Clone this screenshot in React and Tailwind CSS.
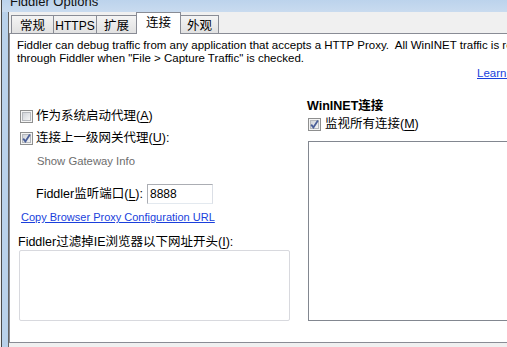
import React from 'react';

const font = "font-['Liberation_Sans','Noto_Sans_CJK_SC',sans-serif]";

const CheckBox = ({ checked }) => (
  <svg width="13" height="13" viewBox="0 0 13 13" className="shrink-0">
    <defs>
      <linearGradient id={checked ? 'cbOn' : 'cbOff'} x1="0" y1="0" x2="1" y2="1">
        <stop offset="0" stopColor="#cdd1d7" />
        <stop offset="1" stopColor="#f7f7f7" />
      </linearGradient>
    </defs>
    <rect x="0.5" y="0.5" width="12" height="12" fill="#f4f4f4" stroke="#8e8f8f" />
    <rect x="2.5" y="2.5" width="8" height="8" fill={`url(#${checked ? 'cbOn' : 'cbOff'})`} stroke="#b5b8bd" />
    {checked && (
      <path d="M3.2 6.6 L5.4 9.4 L9.9 2.6" fill="none" stroke="#4a5f99" strokeWidth="1.8" />
    )}
  </svg>
);

const Mn = ({ pre = '(', ch, post = ')' }) => (
  <span>
    {pre}
    <span className="underline underline-offset-[2px]">{ch}</span>
    {post}
  </span>
);

const tabs = [
  { label: '常规', w: 'w-[42px]', cls: 'border-l' },
  { label: 'HTTPS', w: 'w-[43px]', cls: 'border-l text-[12px]' },
  { label: '扩展', w: 'w-[40px]', cls: 'border-l' },
  { label: '连接', w: 'w-[45px]', active: true },
  { label: '外观', w: 'w-[38px]', cls: 'border-r' },
];

export default function App() {
  return (
    <div className={`w-[507px] h-[347px] overflow-hidden bg-[#f0f0f0] text-black ${font}`}>
      <div className="ml-[1px] w-[640px] h-full flex flex-col border-l border-[#4a4a4a]">
        {/* title bar, mostly scrolled off */}
        <div className="h-[12px] shrink-0 overflow-hidden bg-gradient-to-b from-[#bcd3ec] to-[#c9dbef] pl-[8px]">
          <div className="-mt-[6px] text-[13px] leading-[16px] text-[#111]">Fiddler Options</div>
        </div>

        <div className="flex flex-1 min-h-0">
          <div className="w-[6px] shrink-0 bg-[#b9d1ea]" />
          <div className="flex-1 flex flex-col border-l border-[#646464] bg-[#f0f0f0]">
            {/* tab strip */}
            <div className="h-[21px] shrink-0 flex items-end pl-[2px] relative z-10">
              {tabs.map((t) =>
                t.active ? (
                  <div
                    key={t.label}
                    className={`${t.w} h-[22px] -mb-[1px] bg-white border-t border-l border-r border-[#898c95] flex justify-center pt-[3px] text-[12.5px] leading-[15px]`}
                  >
                    {t.label}
                  </div>
                ) : (
                  <div
                    key={t.label}
                    className={`${t.w} h-[18px] bg-gradient-to-b from-[#f4f4f4] to-[#e1e1e1] border-t border-[#898c95] ${t.cls} flex justify-center pt-[3px] text-[12.5px] leading-[15px]`}
                  >
                    {t.label}
                  </div>
                )
              )}
            </div>

            {/* tab page */}
            <div className="h-[310px] shrink-0 bg-white border-t border-l border-b border-[#898c95]">
              <div className="pt-[5px] pl-[7px] text-[11.5px] leading-[13px] whitespace-nowrap">
                <div>Fiddler can debug traffic from any application that accepts a HTTP Proxy.&nbsp; All WinINET traffic is routed</div>
                <div>through Fiddler when "File &gt; Capture Traffic" is checked.</div>
              </div>
              <div className="mt-[2px] pl-[467px] text-[11.5px] leading-[13px]">
                <span className="text-[#1a3fdc] underline">Learn more...</span>
              </div>

              <div className="mt-[19px] flex">
                {/* left column */}
                <div className="w-[297px] shrink-0 flex flex-col text-[12.5px]">
                  <div className="mt-[9px] ml-[10px] h-[16px] flex items-center gap-[3px] leading-[16px]">
                    <CheckBox />
                    <span>
                      作为系统启动代理<Mn ch="A" />
                    </span>
                  </div>
                  <div className="mt-[6px] ml-[10px] h-[16px] flex items-center gap-[3px] leading-[16px]">
                    <CheckBox checked />
                    <span>
                      连接上一级网关代理<Mn ch="U" post="):" />
                    </span>
                  </div>
                  <div className="mt-[9px] ml-[27px] text-[11.3px] leading-[13px] text-[#6d6d6d]">Show Gateway Info</div>
                  <div className="mt-[16px] ml-[26px] h-[20px] flex items-center leading-[16px]">
                    <span className="w-[111px] shrink-0">
                      Fiddler监听端口<Mn ch="L" post="):" />
                    </span>
                    <div className="w-[66px] h-[20px] border border-[#abadb3] border-b-[#e3e9ef] border-r-[#dbdfe6] pl-[2px] text-[12px] leading-[18px]">
                      8888
                    </div>
                  </div>
                  <div className="mt-[7px] ml-[11px] text-[11px] leading-[13px]">
                    <span className="text-[#1a3fdc] underline">Copy Browser Proxy Configuration URL</span>
                  </div>
                  <div className="mt-[11px] ml-[8px] leading-[15px]">
                    Fiddler过滤掉IE浏览器以下网址开头<Mn ch="I" post="):" />
                  </div>
                  <div className="ml-[9px] w-[271px] h-[71px] border border-[#d8d9de] rounded-[2px] bg-white" />
                </div>

                {/* right column */}
                <div className="flex flex-col text-[12.5px]">
                  <div className="font-bold leading-[15px]">WinINET连接</div>
                  <div className="mt-[2px] ml-[1px] h-[16px] flex items-center gap-[4px] leading-[16px]">
                    <CheckBox checked />
                    <span>
                      监视所有连接<Mn ch="M" />
                    </span>
                  </div>
                  <div className="mt-[9px] ml-[1px] w-[300px] h-[180px] border border-[#828790] bg-white" />
                </div>
              </div>
            </div>
          </div>
        </div>
      </div>
    </div>
  );
}
